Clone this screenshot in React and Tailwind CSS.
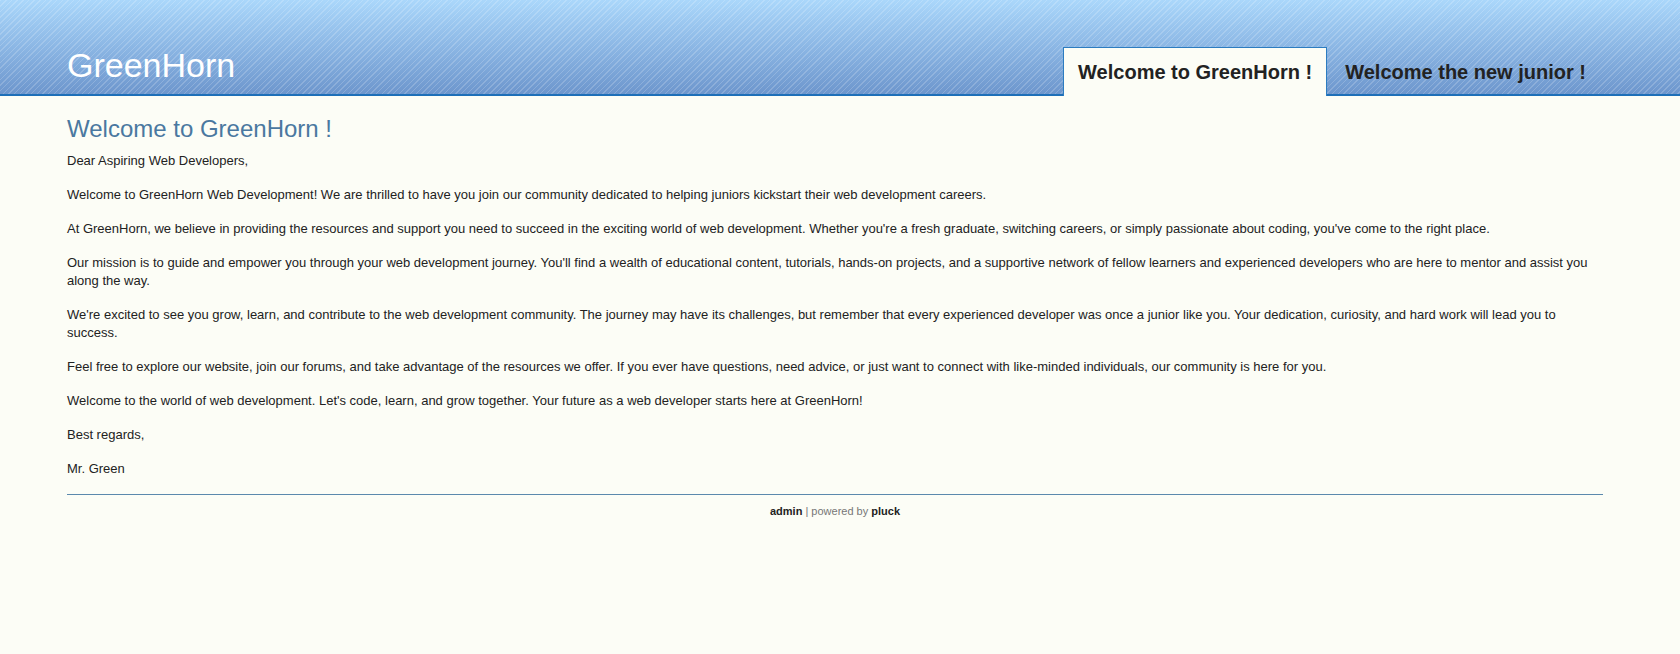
import React from 'react';

const paragraphs = [
  'Dear Aspiring Web Developers,',
  'Welcome to GreenHorn Web Development! We are thrilled to have you join our community dedicated to helping juniors kickstart their web development careers.',
  "At GreenHorn, we believe in providing the resources and support you need to succeed in the exciting world of web development. Whether you're a fresh graduate, switching careers, or simply passionate about coding, you've come to the right place.",
  "Our mission is to guide and empower you through your web development journey. You'll find a wealth of educational content, tutorials, hands-on projects, and a supportive network of fellow learners and experienced developers who are here to mentor and assist you along the way.",
  "We're excited to see you grow, learn, and contribute to the web development community. The journey may have its challenges, but remember that every experienced developer was once a junior like you. Your dedication, curiosity, and hard work will lead you to success.",
  'Feel free to explore our website, join our forums, and take advantage of the resources we offer. If you ever have questions, need advice, or just want to connect with like-minded individuals, our community is here for you.',
  "Welcome to the world of web development. Let's code, learn, and grow together. Your future as a web developer starts here at GreenHorn!",
  'Best regards,',
  'Mr. Green',
];

const App = () => {
  return (
    <div className="min-h-screen bg-[#fcfdf6] font-['Liberation_Sans',Arial,sans-serif]">
      {/* Header with striped gradient */}
      <header className="h-[96px] border-b-2 border-[#1d6fb8] [background-image:repeating-linear-gradient(135deg,rgba(255,255,255,0.18)_0px,rgba(255,255,255,0.18)_1px,transparent_1px,transparent_4px),linear-gradient(to_bottom,#aad7fb,#6d96cd)]">
        <div className="ml-[67px] w-[1536px] h-full flex items-end justify-between">
          <div className="text-[34px] leading-[40px] text-white pb-[9px]">GreenHorn</div>
          <nav className="flex gap-[3px] pr-[2px] -mb-[2px]">
            <a className="block border border-b-0 border-[#2c7cc0] bg-[#fcfdf6] px-[14px] pt-[12px] pb-[12px] text-[20px] leading-[24px] font-bold text-[#222]">
              Welcome to GreenHorn !
            </a>
            <a className="block border border-b-0 border-transparent px-[14px] pt-[12px] pb-[12px] text-[20px] leading-[24px] font-bold text-[#222]">
              Welcome the new junior !
            </a>
          </nav>
        </div>
      </header>

      <main className="ml-[67px] w-[1536px]">
        <h1 className="mt-[19px] mb-[9px] text-[24px] leading-[28px] text-[#4a78a0]">Welcome to GreenHorn !</h1>
        {paragraphs.map((p, i) => (
          <p key={i} className="mb-[16px] text-[13px] leading-[18px] text-[#222]">
            {p}
          </p>
        ))}
        <div className="mt-[3px] border-t border-[#5b89ad] pt-[9px] text-center text-[11px] leading-[14px] text-[#777]">
          <span className="font-bold text-[#222]">admin</span> | powered by{' '}
          <span className="font-bold text-[#222]">pluck</span>
        </div>
      </main>
    </div>
  );
};

export default App;
